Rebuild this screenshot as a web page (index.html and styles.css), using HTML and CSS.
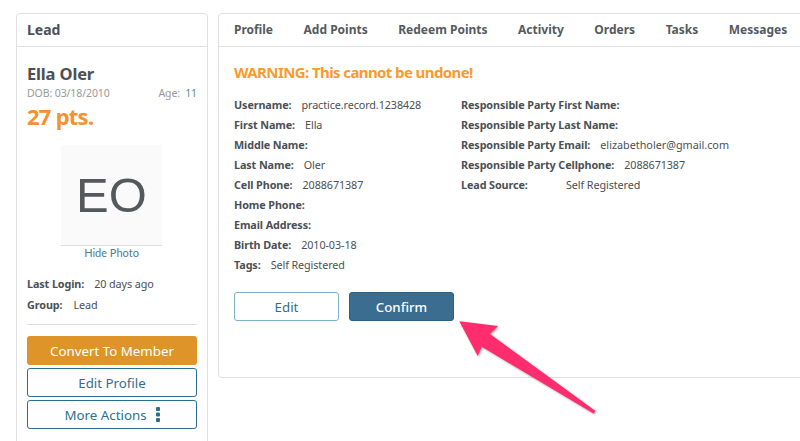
FILE: index.html
```html
<!DOCTYPE html>
<html lang="en">
<head>
<meta charset="utf-8">
<title>Lead</title>
<link rel="stylesheet" href="styles.css">
</head>
<body>
<div class="page">
  <aside class="card side">
    <div class="side-head">Lead</div>
    <div class="side-body">
      <div class="name">Ella Oler</div>
      <div class="dob-row"><span>DOB: 03/18/2010</span><span>Age:&nbsp; <span class="age">11</span></span></div>
      <div class="pts">27 pts.</div>
      <div class="avatar">EO</div>
      <div class="hide-photo">Hide Photo</div>
      <div class="meta first"><b>Last Login:</b><span>20 days ago</span></div>
      <div class="meta"><b>Group:</b><span class="group">Lead</span></div>
      <hr class="rule">
      <div class="actions">
        <div class="btn solid-orange">Convert To Member</div>
        <div class="btn outline">Edit Profile</div>
        <div class="btn outline">More Actions
          <svg class="dots" width="4" height="15" viewBox="0 0 4 15"><rect y="0" width="4" height="4" rx="1"/><rect y="5.5" width="4" height="4" rx="1"/><rect y="11" width="4" height="4" rx="1"/></svg>
        </div>
      </div>
    </div>
  </aside>
  <main class="card content">
    <nav class="tabs">
      <span class="tab">Profile</span>
      <span class="tab">Add Points</span>
      <span class="tab">Redeem Points</span>
      <span class="tab">Activity</span>
      <span class="tab">Orders</span>
      <span class="tab">Tasks</span>
      <span class="tab">Messages</span>
    </nav>
    <div class="content-body">
      <h2 class="warning">WARNING: This cannot be undone!</h2>
      <div class="columns">
        <div class="col col-a">
          <div class="row"><b>Username:</b><span>practice.record.1238428</span></div>
          <div class="row"><b>First Name:</b><span>Ella</span></div>
          <div class="row"><b>Middle Name:</b></div>
          <div class="row"><b>Last Name:</b><span>Oler</span></div>
          <div class="row"><b>Cell Phone:</b><span>2088671387</span></div>
          <div class="row"><b>Home Phone:</b></div>
          <div class="row"><b>Email Address:</b></div>
          <div class="row"><b>Birth Date:</b><span>2010-03-18</span></div>
          <div class="row"><b>Tags:</b><span>Self Registered</span></div>
        </div>
        <div class="col">
          <div class="row"><b>Responsible Party First Name:</b></div>
          <div class="row"><b>Responsible Party Last Name:</b></div>
          <div class="row"><b>Responsible Party Email:</b><span class="mail">elizabetholer@gmail.com</span></div>
          <div class="row"><b>Responsible Party Cellphone:</b><span>2088671387</span></div>
          <div class="row"><b class="lead-source">Lead Source:</b><span>Self Registered</span></div>
        </div>
      </div>
      <div class="confirm-row">
        <div class="btn edit">Edit</div>
        <div class="btn confirm">Confirm</div>
      </div>
    </div>
  </main>
</div>
<svg class="arrow" width="800" height="441" viewBox="0 0 800 441">
  <path d="M459.3 321.3 L498 326 L490 334 L595.5 411 L593.5 413.5 L481.7 346.7 L477.7 356 Z"/>
</svg>
</body>
</html>
```
FILE: styles.css
```css
* { box-sizing: border-box; }
html, body { margin: 0; height: 441px; overflow: hidden; background: #fff; }
body { font-family: "Noto Sans", "Liberation Sans", sans-serif; color: #4a5055; position: relative; }
.page { display: flex; gap: 10px; padding: 13px 0 0 16px; width: 820px; align-items: flex-start; }
.card { background: #fff; border: 1px solid #e0e0e0; border-radius: 4px; }
.side { width: 192px; height: 450px; flex: none; }
.side-head { height: 33px; padding: 0 10px; border-bottom: 1px solid #e0e0e0; font-size: 14px; font-weight: 700; line-height: 31px; }
.side-body { padding: 16px 10px 0; }
.name { font-size: 16.5px; font-weight: 700; line-height: 22px; letter-spacing: -.15px; }
.dob-row { display: flex; justify-content: space-between; font-size: 10.5px; line-height: 14px; color: #999; margin-top: 1px; letter-spacing: -.1px; }
.age { color: #5d8f98; }
.pts { font-size: 22px; font-weight: 700; color: #f7902f; line-height: 28px; margin-top: 2px; letter-spacing: -.75px; }
.avatar { width: 101px; height: 101px; margin: 15px 0 0 34px; background: #fafafa; border-bottom: 1px solid #ddd; font-family: "Liberation Sans", sans-serif; font-size: 49px; color: #54595c; display: flex; align-items: center; justify-content: center; }
.hide-photo { text-align: center; font-family: Lato, sans-serif; font-size: 11px; color: #4f7c95; line-height: 14px; margin-left: -1px; }
.meta { display: flex; gap: 10px; font-size: 10.8px; line-height: 14px; margin-top: 7px; letter-spacing: -.1px; }
.meta.first { margin-top: 17px; }
.meta .group { margin-left: 1px; }
.rule { border: 0; border-top: 1px solid #ddd; margin: 12px 0 11px; }
.actions { display: flex; flex-direction: column; gap: 3px; }
.btn { display: flex; align-items: center; justify-content: center; height: 29px; border-radius: 3px; font-size: 13.3px; }
.solid-orange { background: #df942a; color: #fff; }
.outline { border: 1px solid #2a6f8e; color: #2f6f8f; }
.dots { margin-left: 9px; fill: #2a6f8e; }
.content { flex: 1; height: 365px; }
.tabs { display: flex; height: 33px; padding-left: 15px; border-bottom: 1px solid #e0e0e0; font-size: 12px; font-weight: 700; line-height: 32px; color: #555a5e; }
.tab { margin-right: 30.5px; white-space: nowrap; }
.content-body { padding: 14px 15px 0; }
.warning { margin: 0; font-size: 15px; font-weight: 700; color: #fb9a2c; line-height: 22px; letter-spacing: -.6px; }
.columns { display: flex; margin-top: 12px; }
.col-a { width: 227px; flex: none; }
.row { display: flex; gap: 10px; height: 20px; font-size: 10.8px; line-height: 20px; letter-spacing: -.1px; white-space: nowrap; }
.mail { letter-spacing: 0; }
.lead-source { width: 95px; }
.confirm-row { display: flex; gap: 10px; margin-top: 17px; }
.edit { width: 105px; border: 1px solid #7fb0c6; color: #2f6f8f; }
.confirm { width: 105px; background: #3a6d90; color: #fff; border: 1px solid #2f5f80; font-weight: 500; }
.arrow { position: absolute; left: 0; top: 0; pointer-events: none; fill: #ff2d6e; filter: drop-shadow(1px 1px 1px rgba(60,60,60,.45)); }
```
